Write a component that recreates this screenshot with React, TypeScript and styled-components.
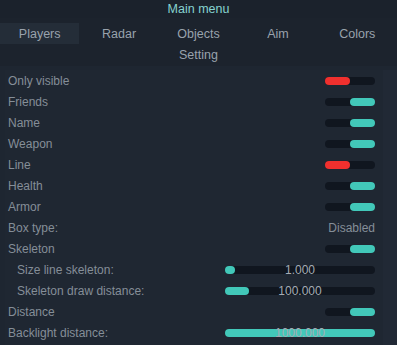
import React from "react";
import styled, { createGlobalStyle } from "styled-components";

const Global = createGlobalStyle`
  html, body {
    margin: 0;
    padding: 0;
    background: #1e2631;
  }
  body {
    font-family: "Liberation Sans", Arial, sans-serif;
  }
`;

const Window = styled.div`
  width: 397px;
  height: 345px;
  background: #1e2631;
  display: flex;
  flex-direction: column;
  overflow: hidden;
`;

const TitleBar = styled.div`
  height: 18px;
  background: #1b222c;
  color: #86d3d0;
  font-size: 12.5px;
  display: flex;
  align-items: center;
  justify-content: center;
`;

const TabArea = styled.div`
  background: #1c232d;
  padding-top: 5px;
  display: flex;
  flex-direction: column;
`;

const TabRow = styled.div`
  display: grid;
  grid-template-columns: repeat(5, 1fr);
`;

const Tab = styled.div<{ $active?: boolean }>`
  height: 21px;
  display: flex;
  align-items: center;
  justify-content: center;
  font-size: 12.5px;
  color: #99a2ac;
  background: ${(p) => (p.$active ? "#242d38" : "transparent")};
`;

const SubTab = styled.div`
  height: 22px;
  display: flex;
  align-items: center;
  justify-content: center;
  font-size: 12.5px;
  color: #99a2ac;
`;

const Body = styled.div`
  flex: 1;
  display: flex;
  padding-top: 4px;
`;

const Panel = styled.div`
  width: 378px;
  margin-left: 5px;
  padding: 0 8px 0 3px;
  box-sizing: border-box;
  background: #1f2732;
  display: flex;
  flex-direction: column;
`;

const Side = styled.div`
  flex: 1;
  background: #212935;
`;

const Row = styled.div<{ $indent?: boolean }>`
  height: 21px;
  display: flex;
  align-items: center;
  justify-content: space-between;
  padding-left: ${(p) => (p.$indent ? "9px" : "0")};
`;

const Label = styled.span`
  font-size: 12px;
  color: #858e98;
`;

const Value = styled.span`
  font-size: 12px;
  color: #858e98;
`;

const Toggle = styled.div<{ $on: boolean }>`
  width: 50px;
  height: 8px;
  border-radius: 4px;
  background: #10161f;
  display: flex;
  justify-content: ${(p) => (p.$on ? "flex-end" : "flex-start")};
`;

const Knob = styled.div<{ $on: boolean }>`
  width: 25px;
  height: 8px;
  border-radius: 4px;
  background: ${(p) => (p.$on ? "#42c8b9" : "#f0302e")};
`;

const Slider = styled.div`
  position: relative;
  width: 150px;
  height: 8px;
  border-radius: 4px;
  background: #10161f;
`;

const Fill = styled.div`
  height: 8px;
  border-radius: 4px;
  background: #42c8b9;
`;

const SliderText = styled.span`
  position: absolute;
  left: 0;
  right: 0;
  top: -3px;
  text-align: center;
  font-size: 12px;
  line-height: 14px;
  color: #a4acb4;
`;

type Item =
  | { kind: "toggle"; label: string; on: boolean; indent?: boolean }
  | { kind: "text"; label: string; value: string }
  | { kind: "slider"; label: string; value: string; fill: number; indent?: boolean };

const items: Item[] = [
  { kind: "toggle", label: "Only visible", on: false },
  { kind: "toggle", label: "Friends", on: true },
  { kind: "toggle", label: "Name", on: true },
  { kind: "toggle", label: "Weapon", on: true },
  { kind: "toggle", label: "Line", on: false },
  { kind: "toggle", label: "Health", on: true },
  { kind: "toggle", label: "Armor", on: true },
  { kind: "text", label: "Box type:", value: "Disabled" },
  { kind: "toggle", label: "Skeleton", on: true },
  { kind: "slider", label: "Size line skeleton:", value: "1.000", fill: 10, indent: true },
  { kind: "slider", label: "Skeleton draw distance:", value: "100.000", fill: 24, indent: true },
  { kind: "toggle", label: "Distance", on: true },
  { kind: "slider", label: "Backlight distance:", value: "1000.000", fill: 150 },
];

const tabs = ["Players", "Radar", "Objects", "Aim", "Colors"];

export default function App() {
  return (
    <Window>
      <Global />
      <TitleBar>Main menu</TitleBar>
      <TabArea>
        <TabRow>
          {tabs.map((t, i) => (
            <Tab key={t} $active={i === 0}>
              {t}
            </Tab>
          ))}
        </TabRow>
        <SubTab>Setting</SubTab>
      </TabArea>
      <Body>
        <Panel>
          {items.map((it) => (
            <Row key={it.label} $indent={"indent" in it && it.indent}>
              <Label>{it.label}</Label>
              {it.kind === "toggle" && (
                <Toggle $on={it.on}>
                  <Knob $on={it.on} />
                </Toggle>
              )}
              {it.kind === "text" && <Value>{it.value}</Value>}
              {it.kind === "slider" && (
                <Slider>
                  <Fill style={{ width: it.fill }} />
                  <SliderText>{it.value}</SliderText>
                </Slider>
              )}
            </Row>
          ))}
        </Panel>
        <Side />
      </Body>
    </Window>
  );
}
